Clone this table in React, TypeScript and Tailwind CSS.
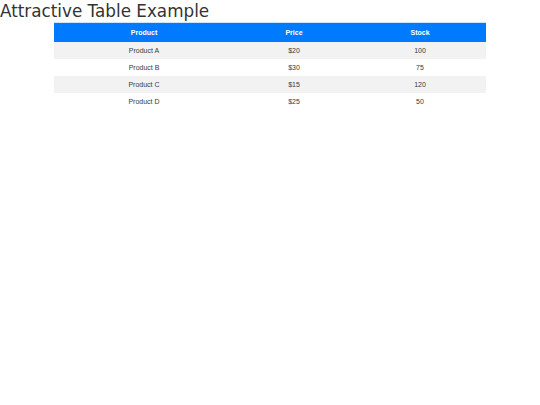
import React from "react";

const rows = [
  { product: "Product A", price: "$20", stock: "100" },
  { product: "Product B", price: "$30", stock: "75" },
  { product: "Product C", price: "$15", stock: "120" },
  { product: "Product D", price: "$25", stock: "50" },
];

export default function App() {
  return (
    <div className="w-[540px] h-[405px] bg-white">
      <h1
        className="text-[16.8px] leading-[22px] text-[#333] m-0"
        style={{ fontFamily: '"DejaVu Sans", sans-serif' }}
      >
        Attractive Table Example
      </h1>
      <div
        className="w-[432px] mx-auto text-[7px]"
        style={{ fontFamily: '"Liberation Sans", Arial, sans-serif' }}
      >
        <div className="grid grid-cols-[180px_120px_132px] h-[20px] pt-[1px] items-center bg-[#007bff] border-t border-[#cce5ff] text-white font-bold text-center">
          <div>Product</div>
          <div>Price</div>
          <div>Stock</div>
        </div>
        {rows.map((r, i) => (
          <div
            key={r.product}
            className={`grid grid-cols-[180px_120px_132px] h-[17px] pt-[1px] items-center text-center text-[#3a3a3a] ${
              i % 2 === 0 ? "bg-[#f2f2f2]" : "bg-white"
            }`}
          >
            <div>{r.product}</div>
            <div>{r.price}</div>
            <div>{r.stock}</div>
          </div>
        ))}
      </div>
    </div>
  );
}
